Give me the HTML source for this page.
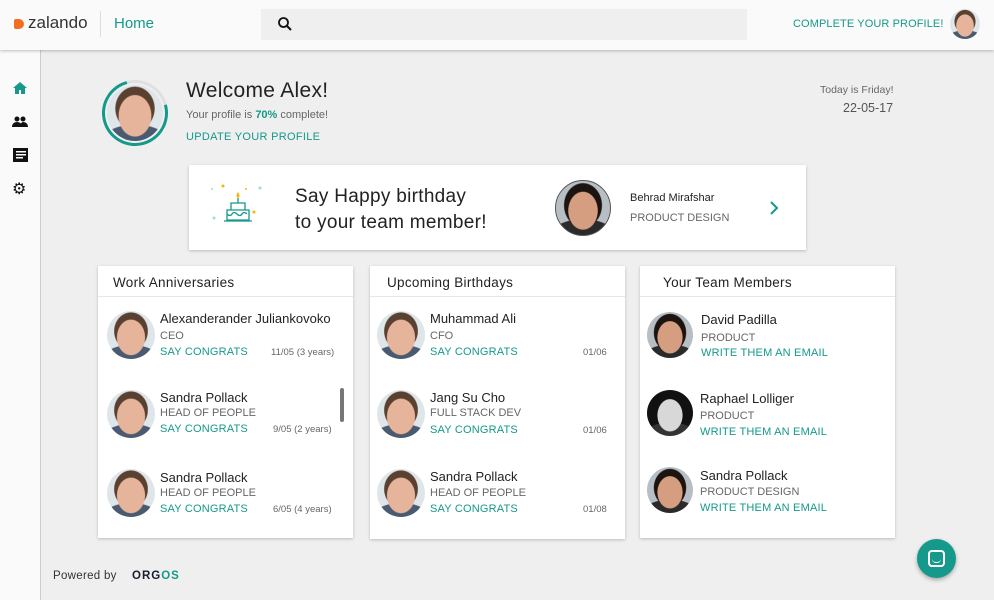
<!DOCTYPE html>
<html><head><meta charset="utf-8"><style>
*{margin:0;padding:0;box-sizing:border-box}
body{width:994px;height:600px;overflow:hidden;background:#efefef;font-family:"Liberation Sans",sans-serif;position:relative;color:#222}
.a{position:absolute}
.teal{color:#14998a}
.hdr{left:0;top:0;width:994px;height:50px;background:#fafafa;box-shadow:0 1px 3px rgba(0,0,0,.25);z-index:2}
.side{left:0;top:50px;width:41px;height:550px;background:#fafafa;border-right:1px solid #ccc}
.card{background:#fff;box-shadow:0 1px 3px rgba(0,0,0,.22)}
.ch{height:31px;border-bottom:1px solid #e6e6e6;font-size:13.5px;color:#222;padding:9px 0 0 15px;letter-spacing:.3px}
.av{position:absolute;width:48px;height:48px;border-radius:50%;overflow:hidden;background:
radial-gradient(ellipse 30% 38% at 50% 55%,#e6b49a 0 95%,transparent 100%),
radial-gradient(ellipse 36% 40% at 50% 42%,#5a4030 0 95%,transparent 100%),
radial-gradient(ellipse 60% 30% at 50% 100%,#4a5a70 0 95%,transparent 100%),#dfe6ea}
.av.dark{background:
radial-gradient(ellipse 28% 36% at 50% 55%,#d59e80 0 95%,transparent 100%),
radial-gradient(ellipse 36% 42% at 50% 45%,#1c1410 0 95%,transparent 100%),
radial-gradient(ellipse 60% 30% at 50% 100%,#2a2a2a 0 95%,transparent 100%),#b8bfc4}
.av.bw{background:
radial-gradient(ellipse 28% 36% at 50% 55%,#d8d8d8 0 95%,transparent 100%),
radial-gradient(ellipse 60% 30% at 50% 100%,#333 0 95%,transparent 100%),#111}
.nm{position:absolute;font-size:13px;color:#222}
.rl{position:absolute;font-size:11px;color:#666}
.lk{position:absolute;font-size:11px;color:#14998a;letter-spacing:.2px}
.dt{position:absolute;font-size:9.5px;color:#666}
</style></head><body>
<div class="a hdr">
 <div class="a" style="left:14px;top:19px;width:10px;height:10px;background:#f26c22;border-radius:2px 50% 50% 2px"></div>
 <div class="a" style="left:28px;top:13px;font-size:17px;color:#333">zalando</div>
 <div class="a" style="left:100px;top:11px;width:1px;height:26px;background:#ddd"></div>
 <div class="a teal" style="left:114px;top:15px;font-size:15px">Home</div>
 <div class="a" style="left:261px;top:9px;width:486px;height:31px;background:#efefef"></div>
 <svg class="a" style="left:277px;top:16px" width="16" height="16" viewBox="0 0 16 16"><circle cx="6.5" cy="6.5" r="4.5" fill="none" stroke="#111" stroke-width="1.8"/><path d="M10 10l4 4" stroke="#111" stroke-width="2"/></svg>
 <div class="a teal" style="left:793px;top:18px;font-size:11px;letter-spacing:.1px">COMPLETE YOUR PROFILE!</div>
 <div class="av" style="left:950px;top:9px;width:30px;height:30px"></div>
</div>
<div class="a side">
 <svg class="a" style="left:13px;top:32px" width="14" height="12" viewBox="0 0 14 12"><path d="M7 0L0 6h2v6h4V8h2v4h4V6h2z" fill="#14998a"/></svg>
 <svg class="a" style="left:12px;top:66px" width="16" height="11" viewBox="0 0 16 11"><circle cx="5" cy="3" r="2.5" fill="#111"/><circle cx="11" cy="3" r="2.5" fill="#111"/><path d="M0 11c0-3 2-5 5-5s5 2 5 5zM8 11c0-2 0-4 3-5 3 0 5 2 5 5z" fill="#111"/></svg>
 <svg class="a" style="left:13px;top:98px" width="15" height="14" viewBox="0 0 15 14"><rect x="0" y="0" width="15" height="14" fill="#111"/><rect x="3" y="3" width="10" height="1.5" fill="#fff"/><rect x="3" y="6" width="10" height="1.5" fill="#fff"/><rect x="3" y="9" width="7" height="1.5" fill="#fff"/></svg>
 <div class="a" style="left:12px;top:129px;font-size:16px;color:#111">⚙</div>
</div>
<div class="a" style="left:102px;top:80px;width:66px;height:66px;border-radius:50%;border:3px solid #14998a;border-top-color:#e0e0e0;transform:rotate(30deg)"></div>
<div class="av" style="left:107px;top:85px;width:56px;height:56px"></div>
<div class="a" style="left:186px;top:79px;font-size:21px;color:#222;letter-spacing:.3px">Welcome Alex!</div>
<div class="a" style="left:186px;top:109px;font-size:11px;color:#666">Your profile is <b class="teal">70%</b> complete!</div>
<div class="a teal" style="left:186px;top:131px;font-size:11px;letter-spacing:.3px">UPDATE YOUR PROFILE</div>
<div class="a" style="left:820px;top:84px;font-size:10.5px;color:#666">Today is Friday!</div>
<div class="a" style="left:843px;top:101px;font-size:12.5px;color:#555">22-05-17</div>

<div class="a card" style="left:189px;top:165px;width:617px;height:85px">
 <svg class="a" style="left:18px;top:18px" width="60" height="45" viewBox="0 0 60 45"><circle cx="5" cy="6" r="1" fill="#9dd"/><circle cx="16" cy="3" r="1.5" fill="#f5b800"/><circle cx="39" cy="6" r="1" fill="#f5b800"/><circle cx="53" cy="5" r="1.5" fill="#9dd"/><circle cx="7" cy="35" r="1.5" fill="#9dd"/><circle cx="47" cy="29" r="1.5" fill="#f5b800"/><path d="M31 9c-2 3-2 5 0 6 2-1 2-3 0-6z" fill="#f5b800"/><path d="M31 15v5M24 20h14v7H24zM20 27h22v10H20zM17 38h28M20 31q3 3 5 0t5 0 5 0 5 0" fill="none" stroke="#14998a" stroke-width="1.3"/></svg>
 <div class="a" style="left:106px;top:19px;font-size:19px;line-height:26px;color:#222;letter-spacing:.3px">Say Happy birthday<br>to your team member!</div>
 <div class="av dark" style="left:366px;top:15px;width:56px;height:56px;border:1px solid #555"></div>
 <div class="a" style="left:441px;top:27px;font-size:11px;color:#222">Behrad Mirafshar</div>
 <div class="a" style="left:441px;top:47px;font-size:11px;color:#666">PRODUCT DESIGN</div>
 <svg class="a" style="left:580px;top:36px" width="10" height="14" viewBox="0 0 10 14"><path d="M2 1l6 6-6 6" fill="none" stroke="#14998a" stroke-width="2"/></svg>
</div>

<div class="a card" style="left:98px;top:266px;width:255px;height:272px">
 <div class="ch">Work Anniversaries</div>
 <div class="av" style="left:9px;top:45px"></div>
 <div class="nm" style="left:62px;top:45px">Alexanderander Juliankovoko</div><div class="rl" style="left:62px;top:64px">CEO</div><div class="lk" style="left:62px;top:80px">SAY CONGRATS</div><div class="dt" style="left:173px;top:81px">11/05 (3 years)</div>
 <div class="av" style="left:9px;top:124px"></div>
 <div class="nm" style="left:62px;top:124px">Sandra Pollack</div><div class="rl" style="left:62px;top:141px">HEAD OF PEOPLE</div><div class="lk" style="left:62px;top:157px">SAY CONGRATS</div><div class="dt" style="left:175px;top:158px">9/05 (2 years)</div>
 <div class="av" style="left:9px;top:203px"></div>
 <div class="nm" style="left:62px;top:204px">Sandra Pollack</div><div class="rl" style="left:62px;top:221px">HEAD OF PEOPLE</div><div class="lk" style="left:62px;top:237px">SAY CONGRATS</div><div class="dt" style="left:175px;top:238px">6/05 (4 years)</div>
 <div class="a" style="left:242px;top:122px;width:4px;height:34px;background:#777;border-radius:2px"></div>
</div>

<div class="a card" style="left:370px;top:266px;width:255px;height:273px">
 <div class="ch" style="padding-left:17px">Upcoming Birthdays</div>
 <div class="av" style="left:7px;top:45px"></div>
 <div class="nm" style="left:60px;top:45px">Muhammad Ali</div><div class="rl" style="left:60px;top:64px">CFO</div><div class="lk" style="left:60px;top:80px">SAY CONGRATS</div><div class="dt" style="left:213px;top:81px">01/06</div>
 <div class="av" style="left:7px;top:124px"></div>
 <div class="nm" style="left:60px;top:124px">Jang Su Cho</div><div class="rl" style="left:60px;top:141px">FULL STACK DEV</div><div class="lk" style="left:60px;top:158px">SAY CONGRATS</div><div class="dt" style="left:213px;top:159px">01/06</div>
 <div class="av" style="left:7px;top:203px"></div>
 <div class="nm" style="left:60px;top:203px">Sandra Pollack</div><div class="rl" style="left:60px;top:221px">HEAD OF PEOPLE</div><div class="lk" style="left:60px;top:237px">SAY CONGRATS</div><div class="dt" style="left:213px;top:238px">01/08</div>
</div>

<div class="a card" style="left:640px;top:266px;width:255px;height:272px">
 <div class="ch" style="padding-left:23px">Your Team Members</div>
 <div class="av dark" style="left:7px;top:46px;width:46px;height:46px"></div>
 <div class="nm" style="left:61px;top:46px">David Padilla</div><div class="rl" style="left:61px;top:66px">PRODUCT</div><div class="lk" style="left:61px;top:81px">WRITE THEM AN EMAIL</div>
 <div class="av bw" style="left:7px;top:124px;width:46px;height:46px"></div>
 <div class="nm" style="left:60px;top:125px">Raphael Lolliger</div><div class="rl" style="left:60px;top:144px">PRODUCT</div><div class="lk" style="left:60px;top:160px">WRITE THEM AN EMAIL</div>
 <div class="av dark" style="left:7px;top:201px;width:46px;height:46px"></div>
 <div class="nm" style="left:60px;top:202px">Sandra Pollack</div><div class="rl" style="left:60px;top:220px">PRODUCT DESIGN</div><div class="lk" style="left:60px;top:236px">WRITE THEM AN EMAIL</div>
</div>

<div class="a" style="left:53px;top:570px;font-size:11.5px;color:#333;letter-spacing:.3px">Powered by</div>
<div class="a" style="left:132px;top:570px;font-size:11.5px;font-weight:bold;color:#1a1d2e;letter-spacing:1px">ORG<span class="teal">OS</span></div>
<div class="a" style="left:917px;top:539px;width:39px;height:39px;border-radius:50%;background:#14998a;box-shadow:0 2px 4px rgba(0,0,0,.3)">
 <div class="a" style="left:11px;top:11px;width:17px;height:17px;border:2px solid #fff;border-radius:4px"></div>
 <div class="a" style="left:15px;top:20px;width:9px;height:4px;border-bottom:1.5px solid #fff;border-radius:0 0 5px 5px"></div>
</div>
</body></html>
